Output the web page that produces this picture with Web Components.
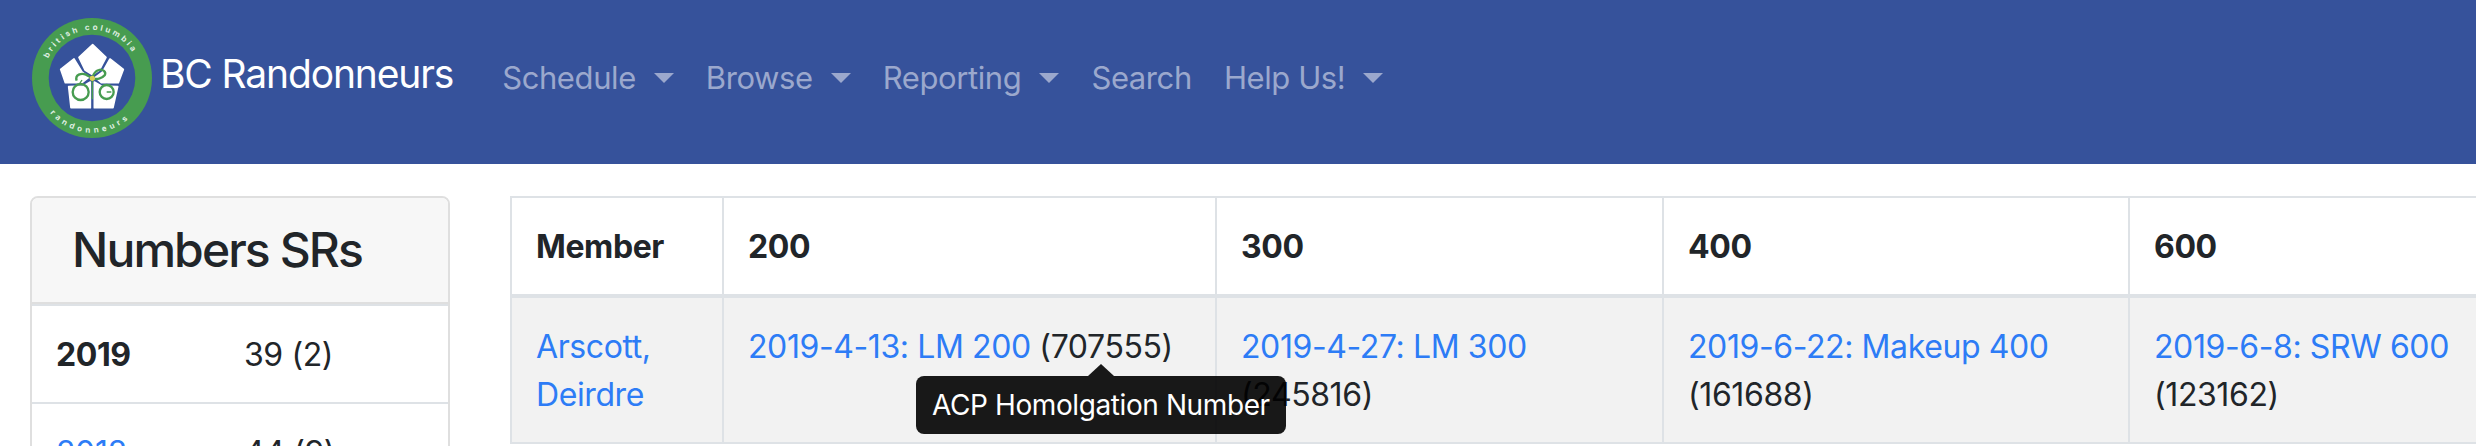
<!DOCTYPE html>
<html>
<head>
<meta charset="utf-8">
<style>
  html, body { margin: 0; height: 446px; overflow: hidden; background: #fff; }
  body { font: 400 32px/48px Inter, "Liberation Sans", sans-serif; color: #212529; letter-spacing: -0.4px; }
  #content { display: flex; align-items: flex-start; padding: 32px 0 0 30px; gap: 60px; }
</style>
</head>
<body>

<template id="nav-tpl">
  <style>
    :host { display: flex; align-items: center; height: 164px; padding: 0 32px 8px; background: #36529b; box-sizing: border-box; }
    .brand { display: flex; align-items: center; gap: 8px; color: #fff; font-size: 39px; letter-spacing: -1.15px; margin-right: 33px; }
    .brand span { padding-bottom: 8px; }
    svg { display: block; }
  </style>
  <div class="brand"><slot name="logo"></slot><span>BC Randonneurs</span></div>
  <slot></slot>
</template>

<template id="link-tpl">
  <style>
    :host { display: block; padding: 0 16px; color: #9ba8cd; font-size: 31px; letter-spacing: -0.4px; }
    :host([caret])::after { content: ""; display: inline-block; margin-left: 18px; vertical-align: 6px;
      border-top: 10px solid; border-left: 10px solid transparent; border-right: 10px solid transparent; }
  </style><slot></slot></template>

<template id="card-tpl">
  <style>
    :host { display: block; width: 420px; box-sizing: border-box; border: 2px solid #dfdfdf; border-radius: 8px; overflow: hidden; flex: none; }
    header { padding: 22px 40px 0; height: 106px; box-sizing: border-box; background: #f7f7f7; border-bottom: 2px solid #dfdfdf; }
    h3 { margin: 0; font-size: 48px; font-weight: 500; line-height: 60px; letter-spacing: -1.9px; }
  </style>
  <header><h3><slot name="title"></slot></h3></header>
  <slot></slot>
</template>

<template id="year-tpl">
  <style>
    :host { display: grid; grid-template-columns: 188px 1fr; padding: 25px 24px 23px; height: 98px; box-sizing: border-box; border-top: 2px solid #dee2e6; }
    ::slotted(a) { color: #2d7cf6; text-decoration: none; }
    ::slotted(b) { font-weight: 700; }
  </style>
  <slot></slot>
</template>

<template id="table-tpl">
  <style>
    :host { display: grid; grid-template-columns: 212px 493px 447px 466px 600px; flex: none; border-top: 2px solid #dee2e6; }
  </style>
  <slot></slot>
</template>

<template id="cell-tpl">
  <style>
    :host { display: block; position: relative; padding: 25px 24px 23px; box-sizing: border-box; border-left: 2px solid #dee2e6; border-bottom: 2px solid #dee2e6; height: 146px; background: #f2f2f2; }
    :host([head]) { height: 100px; background: #fff; font-weight: 700; border-bottom-width: 4px; }
    ::slotted(a) { color: #2d7cf6; text-decoration: none; }
  </style>
  <slot></slot>
</template>

<template id="tip-tpl">
  <style>
    :host { position: absolute; left: 192px; top: 78px; z-index: 2; display: block; padding: 8px 16px; font-size: 28px; line-height: 42px; letter-spacing: -0.4px; color: #fff; background: rgba(0,0,0,.9); border-radius: 8px; white-space: nowrap; }
    :host::before { content: ""; position: absolute; top: -12px; left: 172px; border-bottom: 12px solid rgba(0,0,0,.9); border-left: 13px solid transparent; border-right: 13px solid transparent; }
  </style>
  <slot></slot>
</template>

<site-nav>
  <svg slot="logo" width="120" height="120" viewBox="0 0 360 360">
    <defs>
      <path id="arcTop" d="M 36 180 A 144 144 0 0 1 324 180"/>
      <path id="arcBot" d="M 16 180 A 164 164 0 0 0 344 180"/>
    </defs>
    <circle cx="180" cy="180" r="180" fill="#479c50"/>
    <circle cx="180" cy="180" r="130" fill="#36529b"/>
    <text font-family="Inter, sans-serif" font-size="24" font-weight="700" fill="#dfeee0" letter-spacing="8"><textPath href="#arcTop" startOffset="60">british columbia</textPath></text>
    <text font-family="Inter, sans-serif" font-size="24" font-weight="700" fill="#dfeee0" letter-spacing="11"><textPath href="#arcBot" startOffset="114">randonneurs</textPath></text>
    <g fill="#fff" stroke="#fff" stroke-width="5" stroke-linejoin="round">
      <polygon points="182,80 222,118 202,156 182,170 159,156 141,118"/>
      <polygon points="126,123 86,154 100,194 150,194 170,178 150,162"/>
      <polygon points="234,123 274,154 259,194 208,194 190,178 212,162"/>
      <polygon points="110,206 117,269 175,269 175,192 154,204"/>
      <polygon points="187,192 187,269 243,269 257,206 208,204"/>
    </g>
    <g fill="none" stroke="#479c50" stroke-width="7">
      <circle cx="146" cy="222" r="24"/>
      <circle cx="224" cy="222" r="21"/>
      <path d="M134 188c-6-18 14-24 28-18 8 4 12 8 18 10M180 180c14 6 30 2 38-8 6-10-6-20-18-16-10 3-16 12-20 24"/>
      <path d="M181 182v62M224 222h14M150 186l-8 12" stroke-width="4"/>
    </g>
    <circle cx="181" cy="181" r="8" fill="#d8cf58"/>
  </svg>
  <nav-link caret>Schedule</nav-link>
  <nav-link caret>Browse</nav-link>
  <nav-link caret>Reporting</nav-link>
  <nav-link>Search</nav-link>
  <nav-link caret>Help Us!</nav-link>
</site-nav>

<div id="content">
  <sr-card>
    <span slot="title">Numbers SRs</span>
    <year-row><b>2019</b><span>39 (2)</span></year-row>
    <year-row><a href="#">2018</a><span>44 (9)</span></year-row>
  </sr-card>
  <ride-table>
    <ride-cell head>Member</ride-cell>
    <ride-cell head>200</ride-cell>
    <ride-cell head>300</ride-cell>
    <ride-cell head>400</ride-cell>
    <ride-cell head>600</ride-cell>
    <ride-cell><a href="#">Arscott, Deirdre</a></ride-cell>
    <ride-cell><a href="#">2019-4-13: LM 200</a> (707555)<ride-tip>ACP Homolgation Number</ride-tip></ride-cell>
    <ride-cell><a href="#">2019-4-27: LM 300</a> (245816)</ride-cell>
    <ride-cell><a href="#">2019-6-22: Makeup 400</a> (161688)</ride-cell>
    <ride-cell><a href="#">2019-6-8: SRW 600</a><br>(123162)</ride-cell>
  </ride-table>
</div>

<script>
  // every element here just stamps its template into an open shadow root
  function stamped(tplId) {
    return class extends HTMLElement {
      constructor() {
        super();
        this.attachShadow({ mode: "open" });
        this.shadowRoot.appendChild(document.getElementById(tplId).content.cloneNode(true));
      }
    };
  }
  customElements.define("site-nav", stamped("nav-tpl"));
  customElements.define("nav-link", stamped("link-tpl"));
  customElements.define("sr-card", stamped("card-tpl"));
  customElements.define("year-row", stamped("year-tpl"));
  customElements.define("ride-table", stamped("table-tpl"));
  customElements.define("ride-cell", stamped("cell-tpl"));
  customElements.define("ride-tip", stamped("tip-tpl"));
</script>
</body>
</html>
